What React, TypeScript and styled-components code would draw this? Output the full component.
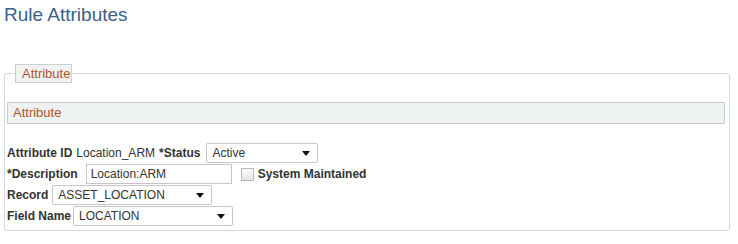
import React from 'react';
import styled, { createGlobalStyle } from 'styled-components';

const GlobalStyle = createGlobalStyle`
    body {
        margin: 0;
        background: #ffffff;
        font-family: 'Liberation Sans', Arial, sans-serif;
        color: #333333;
    }
`;

const Page = styled.div`
    width: 738px;
    height: 244px;
    overflow: hidden;
`;

const Title = styled.h1`
    margin: 0;
    padding: 4px 0 0 4px;
    font-size: 19px;
    line-height: 22px;
    font-weight: normal;
    color: #3e5f8c;
`;

const Group = styled.fieldset`
    margin: 38px 0 0 4px;
    width: 726px;
    height: 167px;
    box-sizing: border-box;
    padding: 0 4px 0 2px;
    border: 1px solid #d3dbe2;
    border-radius: 3px;
`;

const Legend = styled.legend`
    margin-left: 8px;
    padding: 0 1px 0 6px;
    height: 19px;
    box-sizing: border-box;
    line-height: 17px;
    font-size: 13px;
    color: #b0522a;
    background: #f1f3f3;
    border: 1px solid #c9ced3;
`;

const SectionBar = styled.div`
    margin-top: 19px;
    height: 22px;
    box-sizing: border-box;
    padding-left: 5px;
    line-height: 20px;
    font-size: 13px;
    color: #b0522a;
    background: #eef2f2;
    border: 1px solid #c9ced3;
`;

const Rows = styled.div`
    margin-top: 19px;
    display: flex;
    flex-direction: column;
    gap: 1px;
`;

const Row = styled.div`
    display: flex;
    align-items: center;
    height: 20px;
    gap: 4px;
    font-size: 12px;
`;

const Label = styled.span`
    font-weight: bold;
    color: #333333;
`;

const Value = styled.span`
    color: #333333;
`;

const Dropdown = styled.div<{ $width: number; $shift?: number }>`
    width: ${p => p.$width}px;
    height: 20px;
    box-sizing: border-box;
    margin-left: ${p => p.$shift ?? 0}px;
    display: flex;
    align-items: center;
    justify-content: space-between;
    padding: 0 7px 0 5px;
    border: 1px solid #c6c6c6;
    border-radius: 2px;
    background: #ffffff;
    color: #333333;
    font-size: 12px;
`;

const TextBox = styled.div<{ $width: number; $shift?: number }>`
    width: ${p => p.$width}px;
    height: 20px;
    box-sizing: border-box;
    margin-left: ${p => p.$shift ?? 0}px;
    display: flex;
    align-items: center;
    padding: 0 4px;
    border: 1px solid #c6c6c6;
    background: #ffffff;
    font-size: 12px;
    color: #333333;
`;

const Check = styled.span`
    width: 13px;
    height: 13px;
    box-sizing: border-box;
    margin-left: 5px;
    border: 1px solid #b8b8b8;
    background: linear-gradient(#fbfbfb, #e6e6e6);
`;

function Arrow() {
    return (
        <svg width="8" height="5" viewBox="0 0 8 5">
            <polygon points="0,0 8,0 4,5" fill="#111" />
        </svg>
    );
}

export default function App() {
    return (
        <Page>
            <GlobalStyle />
            <Title>Rule Attributes</Title>
            <Group>
                <Legend>Attribute</Legend>
                <SectionBar>Attribute</SectionBar>
                <Rows>
                    <Row>
                        <Label>Attribute ID</Label>
                        <Value>Location_ARM</Value>
                        <Label>*Status</Label>
                        <Dropdown $width={112} $shift={2}>
                            Active <Arrow />
                        </Dropdown>
                    </Row>
                    <Row>
                        <Label>*Description</Label>
                        <TextBox $width={146} $shift={4}>Location:ARM</TextBox>
                        <Check />
                        <Label>System Maintained</Label>
                    </Row>
                    <Row>
                        <Label>Record</Label>
                        <Dropdown $width={160}>
                            ASSET_LOCATION <Arrow />
                        </Dropdown>
                    </Row>
                    <Row>
                        <Label>Field Name</Label>
                        <Dropdown $width={160} $shift={-2}>
                            LOCATION <Arrow />
                        </Dropdown>
                    </Row>
                </Rows>
            </Group>
        </Page>
    );
}
